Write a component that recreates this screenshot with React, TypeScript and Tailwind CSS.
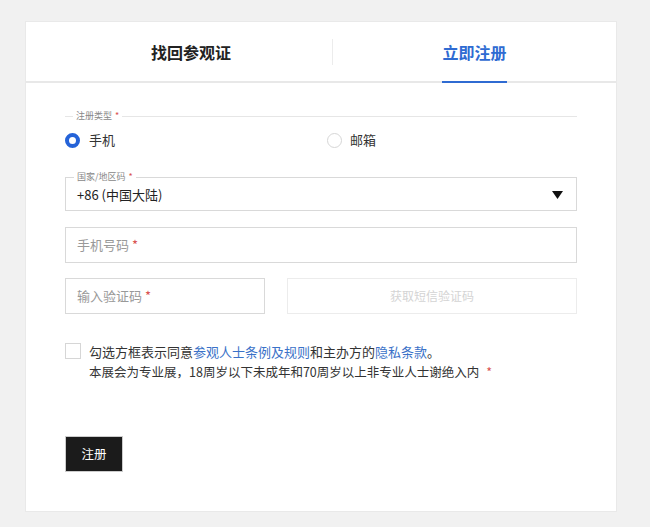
const font = { fontFamily: '"Noto Sans CJK SC", "Noto Sans", sans-serif' };

function Star() {
  return <span className="text-[#d9534f] ml-[3px]">*</span>;
}

export default function App() {
  return (
    <div className="min-h-[527px] bg-[#f1f1f1] pt-[21px] pl-[25px]" style={font}>
      <div className="w-[592px] h-[491px] bg-white border border-[#e9e9e9]">
        {/* tabs */}
        <div className="flex h-[61px] border-b-2 border-[#e8e8e8]">
          <div className="w-[306px] pl-[24px] flex items-center justify-center">
            <span className="text-[16px] font-bold text-[#222]">找回参观证</span>
          </div>
          <div className="w-px h-[26px] bg-[#ececec] self-center" />
          <div className="flex-1 flex items-center justify-center">
            <span className="relative h-full flex items-center text-[16px] font-bold text-[#2f6bd2]">
              立即注册
              <span className="absolute left-0 right-0 bottom-[-2px] h-[2px] bg-[#2f6bd2]" />
            </span>
          </div>
        </div>

        <div className="px-[39px] pt-[27px]">
          {/* register type */}
          <fieldset className="border-t border-[#e6e6e6]">
            <legend className="ml-[8px] px-[3px] text-[9px] text-[#888] leading-[12px]">
              注册类型<Star />
            </legend>
            <div className="flex items-center h-[24px] mt-[6px]">
              <label className="w-[262px] flex items-center text-[13px] text-[#333]">
                <span className="w-[15px] h-[15px] rounded-full border-[4px] border-[#2563d8] bg-white mr-[9px]" />
                手机
              </label>
              <label className="flex items-center text-[13px] text-[#333]">
                <span className="w-[15px] h-[15px] rounded-full border border-[#d6d6d6] bg-white mr-[8px]" />
                邮箱
              </label>
            </div>
          </fieldset>

          {/* country code */}
          <fieldset className="mt-[20px] border border-[#d9d9d9] h-[39px]">
            <legend className="ml-[8px] px-[3px] text-[9px] text-[#888] leading-[10px]">
              国家/地区码<Star />
            </legend>
            <div className="flex items-center justify-between pl-[11px] pr-[13px] h-[26px]">
              <span className="text-[13px] text-[#222]">+86 (中国大陆)</span>
              <svg width="11" height="8" viewBox="0 0 11 8">
                <path d="M0 0 H11 L5.5 8 Z" fill="#111" />
              </svg>
            </div>
          </fieldset>

          {/* phone */}
          <div className="mt-[16px] h-[36px] border border-[#d9d9d9] flex items-center pl-[11px] text-[13px] text-[#999]">
            手机号码<Star />
          </div>

          {/* code row */}
          <div className="mt-[15px] flex gap-[22px]">
            <div className="w-[200px] h-[36px] border border-[#d9d9d9] flex items-center pl-[11px] text-[13px] text-[#999]">
              输入验证码<Star />
            </div>
            <div className="flex-1 h-[36px] border border-[#ececec] flex items-center justify-center text-[12px] text-[#d4d4d4]">
              获取短信验证码
            </div>
          </div>

          {/* agreement */}
          <div className="mt-[28px] flex">
            <span className="w-[16px] h-[16px] border border-[#d6d6d6] mt-[1px] mr-[8px] shrink-0" />
            <div className="text-[13px] text-[#333] leading-[20px]">
              <div>
                勾选方框表示同意<span className="text-[#3b72c8]">参观人士条例及规则</span>和主办方的<span className="text-[#3b72c8]">隐私条款</span>。
              </div>
              <div className="text-[12.5px]">
                本展会为专业展，18周岁以下未成年和70周岁以上非专业人士谢绝入内<span className="text-[#d9534f] ml-[7px]">*</span>
              </div>
            </div>
          </div>

          <button className="mt-[54px] w-[58px] h-[36px] bg-[#1b1b1b] border border-[#ccc] text-white text-[12.5px]">
            注册
          </button>
        </div>
      </div>
    </div>
  );
}
